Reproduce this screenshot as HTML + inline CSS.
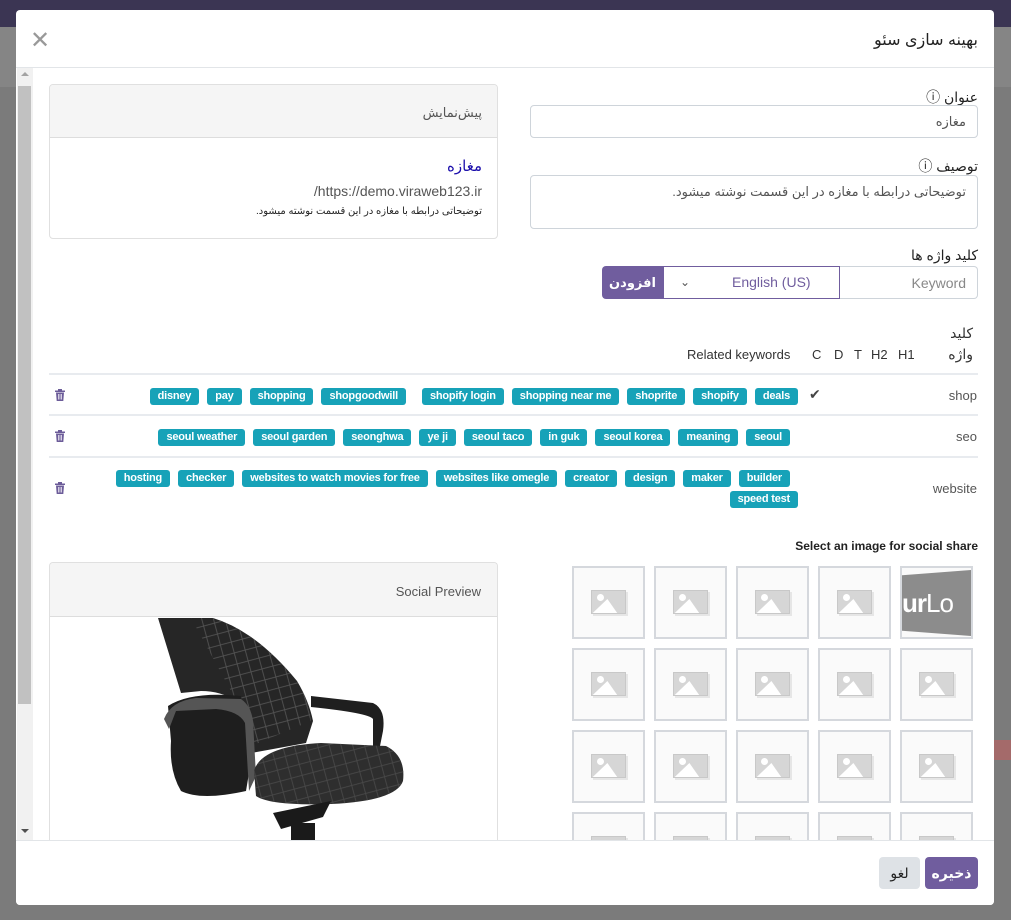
<!DOCTYPE html>
<html><head><meta charset="utf-8">
<style>
*{box-sizing:border-box;margin:0;padding:0}
body{width:1011px;height:920px;overflow:hidden;background:#7b7b7b;font-family:"Liberation Sans","DejaVu Sans",sans-serif;position:relative;color:#444}
.a{position:absolute}
.fa{font-family:"Liberation Sans","Noto Sans CJK SC","DejaVu Sans",sans-serif}
.tagrow{position:absolute;display:flex;justify-content:flex-end;gap:8px}
.tag{background:#17a2b8;color:#fff;font-size:11px;font-weight:bold;height:17px;line-height:17px;padding:0 8px;border-radius:3px;white-space:nowrap;letter-spacing:-0.2px}
.tile{position:absolute;width:73px;height:73px;border:2px solid #d5d8dd;background:#fafafa}
.tile .ph{position:absolute;left:17px;top:22px;width:35px;height:24px;background:#d6d6d6;border:1px solid #c8c8c8;box-shadow:2px 2px 0 #e6e6e6;overflow:hidden}
.trash{position:absolute;left:55px;width:10px;height:12px}
.hr{position:absolute;left:49px;width:929px;height:2px;background:#e8ebef}
.ph::after{content:"";position:absolute;left:0;top:8px;width:0;height:0;border-left:14px solid transparent;border-right:14px solid transparent;border-bottom:16px solid #fff;transform:skewX(-10deg)}
.ph::before{content:"";position:absolute;left:5px;top:3px;width:7px;height:7px;border-radius:50%;background:#fff}
</style></head><body>
<div class="a" style="left:0;top:0;width:1011px;height:27px;background:#3b3553"></div>
<div class="a" style="left:0;top:27px;width:1011px;height:60px;background:#858585"></div>
<div class="a" style="left:994px;top:740px;width:17px;height:20px;background:#a46a6a"></div>

<!-- social preview card (under modal footer) -->
<div class="a" style="left:16px;top:10px;width:978px;height:895px;background:#fff;border-radius:4px"></div>

<div class="a" style="left:49px;top:562px;width:449px;height:278px;border:1px solid #e0e0e0;border-bottom:none;border-radius:4px 4px 0 0;overflow:hidden;background:#fff">
  <div class="a" style="left:0;top:0;width:449px;height:54px;background:#f5f5f5;border-bottom:1px solid #ddd"></div>
  <div class="a" style="right:16px;top:21px;font-size:13px;color:#555">Social Preview</div>
  <svg class="a" style="left:0;top:54px" width="449" height="230" viewBox="49 616 449 230">
    <defs><pattern id="dm" width="16" height="16" patternUnits="userSpaceOnUse" patternTransform="rotate(30)"><path d="M0 0L16 16M16 0L0 16" stroke="#555" stroke-width="0.8"/></pattern></defs>
    <path d="M157 617 L212 617 Q255 630 296 680 Q308 700 312 720 L305 742 L250 752 L235 700 Q220 690 200 690 L180 692 Z" fill="#262626"/>
    <path d="M190 617 L212 617 Q255 630 296 680 Q308 700 310 720 L250 745 L230 690 Z" fill="url(#dm)"/>
    <path d="M167 705 Q190 690 240 695 L250 760 L245 790 Q200 800 180 790 Q168 770 170 740 Z" fill="#1e1e1e"/>
    <path d="M163 718 Q170 700 195 697 L240 698 Q250 705 252 720 L255 775 L248 790 L244 722 Q238 710 215 708 L175 710 L168 728 Z" fill="#555"/>
    <path d="M310 695 L372 702 Q385 708 382 730 L378 750 L372 748 L372 718 Q368 712 310 706 Z" fill="#1f1f1f"/>
    <path d="M253 770 Q260 745 320 742 L385 745 Q405 755 402 780 Q395 800 330 803 Q270 805 255 795 Z" fill="#2e2e2e"/>
    <path d="M253 770 Q260 745 320 742 L385 745 Q405 755 402 780 Q395 800 330 803 Q270 805 255 795 Z" fill="url(#dm)" opacity="0.7"/>
    <path d="M272 812 L330 800 L322 816 L280 828 Z M290 822 h24 v24 h-24z" fill="#1a1a1a"/>
  </svg>
</div>

<div class="a" style="left:16px;top:10px;width:978px;height:895px;border-radius:4px;pointer-events:none">
  <div class="a" style="left:14px;top:18px;font-size:24px;color:#999;line-height:26px">✕</div>
  <div class="a fa" style="right:16px;top:20px;font-size:16px;color:#222;direction:rtl">بهینه سازی سئو</div>
  <div class="a" style="left:0;top:57px;width:978px;height:1px;background:#e2e5e8"></div>
  <div class="a" style="left:1px;top:58px;width:16px;height:772px;background:#f1f1f1"></div>
  <div class="a" style="left:2px;top:76px;width:13px;height:618px;background:#c1c1c1"></div>
  <div class="a" style="left:5px;top:62px;width:0;height:0;border-left:4px solid transparent;border-right:4px solid transparent;border-bottom:4px solid #a3a3a3"></div>
  <div class="a" style="left:5px;top:819px;width:0;height:0;border-left:4px solid transparent;border-right:4px solid transparent;border-top:4px solid #505050"></div>
  <div class="a" style="left:0;top:830px;width:978px;height:65px;background:#fff;border-top:1px solid #e2e5e8;border-radius:0 0 4px 4px"></div>
  <div class="a fa" style="left:863px;top:847px;width:41px;height:32px;background:#dee2e6;border-radius:4px;font-size:14px;text-align:center;line-height:32px;color:#222">لغو</div>
  <div class="a fa" style="left:909px;top:847px;width:53px;height:32px;background:#705d9e;border-radius:4px;font-size:14px;font-weight:bold;text-align:center;line-height:32px;color:#fff">ذخیره</div>
</div>

<!-- preview card -->
<div class="a" style="left:49px;top:84px;width:449px;height:155px;border:1px solid #e0e0e0;border-radius:4px;overflow:hidden">
  <div class="a" style="left:0;top:0;width:449px;height:53px;background:#f5f5f5;border-bottom:1px solid #ddd"></div>
  <div class="a fa" style="right:15px;top:20px;font-size:13px;color:#555;direction:rtl">پیش‌نمایش</div>
  <div class="a fa" style="right:15px;top:72px;font-size:15px;color:#1a0dab;direction:rtl">مغازه</div>
  <div class="a" style="right:15px;top:98px;font-size:14px;color:#555">/https://demo.viraweb123.ir</div>
  <div class="a fa" style="right:15px;top:121px;font-size:10px;color:#222;direction:rtl">توضیحاتی درابطه با مغازه در این قسمت نوشته میشود.</div>
</div>

<!-- right form -->
<div class="a fa" style="right:33px;top:87px;font-size:14px;color:#222;direction:rtl">عنوان ⓘ</div>
<div class="a" style="left:530px;top:105px;width:448px;height:33px;border:1px solid #ced4da;border-radius:4px"></div>
<div class="a fa" style="right:45px;top:114px;font-size:13px;color:#555;direction:rtl">مغازه</div>
<div class="a fa" style="right:33px;top:156px;font-size:14px;color:#222;direction:rtl">توصیف ⓘ</div>
<div class="a" style="left:530px;top:175px;width:448px;height:54px;border:1px solid #ced4da;border-radius:4px"></div>
<div class="a fa" style="right:45px;top:184px;font-size:13px;color:#555;direction:rtl">توضیحاتی درابطه با مغازه در این قسمت نوشته میشود.</div>
<div class="a fa" style="right:33px;top:247px;font-size:14px;color:#222;direction:rtl">کلید واژه ها</div>
<div class="a fa" style="left:602px;top:266px;width:61px;height:33px;background:#705d9e;border-radius:4px 0 0 4px;color:#fff;font-size:13px;font-weight:bold;text-align:center;line-height:33px">افزودن</div>
<div class="a" style="left:663px;top:266px;width:177px;height:33px;border:1px solid #705d9e"></div>
<div class="a" style="left:680px;top:275px;font-size:12px;color:#555">&#8964;</div>
<div class="a" style="left:732px;top:274px;font-size:14px;color:#705d9e">English (US)</div>
<div class="a" style="left:840px;top:266px;width:138px;height:33px;border:1px solid #ced4da;border-left:none;border-radius:0 4px 4px 0"></div>
<div class="a" style="right:45px;top:275px;font-size:14px;color:#888">Keyword</div>

<!-- table head -->
<div class="a fa" style="right:38px;top:325px;font-size:14px;color:#333;direction:rtl">کلید</div>
<div class="a fa" style="right:38px;top:346px;font-size:14px;color:#333;direction:rtl">واژه</div>
<div class="a" style="left:687px;top:347px;font-size:13px;color:#333">Related keywords</div>
<div class="a" style="left:812px;top:347px;font-size:13px;color:#333">C</div>
<div class="a" style="left:834px;top:347px;font-size:13px;color:#333">D</div>
<div class="a" style="left:854px;top:347px;font-size:13px;color:#333">T</div>
<div class="a" style="left:871px;top:347px;font-size:13px;color:#333">H2</div>
<div class="a" style="left:898px;top:347px;font-size:13px;color:#333">H1</div>
<div class="hr" style="top:373px"></div>
<div class="hr" style="top:414px"></div>
<div class="hr" style="top:456px"></div>

<div class="a" style="right:34px;top:388px;font-size:13px;color:#555">shop</div>
<div class="a" style="right:34px;top:429px;font-size:13px;color:#555">seo</div>
<div class="a" style="right:34px;top:481px;font-size:13px;color:#555">website</div>
<div class="a" style="left:809px;top:386px;font-size:14px;color:#444">✔</div>

<svg class="trash" style="top:389px" viewBox="0 0 10 12"><rect x="0" y="1.5" width="10" height="1.5" fill="#6c5c99"/><rect x="3" y="0" width="4" height="2" fill="#6c5c99"/><path d="M1 3.5h8l-0.7 8.5h-6.6z" fill="#6c5c99"/><path d="M3.5 5v5.5M5 5v5.5M6.5 5v5.5" stroke="#fff" stroke-width="0.7"/></svg>
<svg class="trash" style="top:430px" viewBox="0 0 10 12"><rect x="0" y="1.5" width="10" height="1.5" fill="#6c5c99"/><rect x="3" y="0" width="4" height="2" fill="#6c5c99"/><path d="M1 3.5h8l-0.7 8.5h-6.6z" fill="#6c5c99"/><path d="M3.5 5v5.5M5 5v5.5M6.5 5v5.5" stroke="#fff" stroke-width="0.7"/></svg>
<svg class="trash" style="top:482px" viewBox="0 0 10 12"><rect x="0" y="1.5" width="10" height="1.5" fill="#6c5c99"/><rect x="3" y="0" width="4" height="2" fill="#6c5c99"/><path d="M1 3.5h8l-0.7 8.5h-6.6z" fill="#6c5c99"/><path d="M3.5 5v5.5M5 5v5.5M6.5 5v5.5" stroke="#fff" stroke-width="0.7"/></svg>

<div class="tagrow" style="right:213px;top:388px;width:700px">
<span class="tag">disney</span><span class="tag">pay</span><span class="tag">shopping</span><span class="tag" style="margin-right:8px">shopgoodwill</span><span class="tag">shopify login</span><span class="tag">shopping near me</span><span class="tag">shoprite</span><span class="tag">shopify</span><span class="tag">deals</span>
</div>
<div class="tagrow" style="right:221px;top:429px;width:700px">
<span class="tag">seoul weather</span><span class="tag">seoul garden</span><span class="tag">seonghwa</span><span class="tag">ye ji</span><span class="tag">seoul taco</span><span class="tag">in guk</span><span class="tag">seoul korea</span><span class="tag">meaning</span><span class="tag">seoul</span>
</div>
<div class="tagrow" style="right:221px;top:470px;width:700px">
<span class="tag">hosting</span><span class="tag">checker</span><span class="tag">websites to watch movies for free</span><span class="tag">websites like omegle</span><span class="tag">creator</span><span class="tag">design</span><span class="tag">maker</span><span class="tag">builder</span>
</div>
<div class="tagrow" style="right:213px;top:491px;width:200px"><span class="tag">speed test</span></div>

<div class="a" style="right:33px;top:539px;font-size:12px;font-weight:bold;color:#222">Select an image for social share</div>

<!-- tiles -->
<div class="tile" style="left:572px;top:566px"><div class="ph"></div></div>
<div class="tile" style="left:654px;top:566px"><div class="ph"></div></div>
<div class="tile" style="left:736px;top:566px"><div class="ph"></div></div>
<div class="tile" style="left:818px;top:566px"><div class="ph"></div></div>
<div class="tile" style="left:900px;top:566px;overflow:hidden"><div class="a" style="left:0;top:2px;width:69px;height:66px;background:#8c8c8c;clip-path:polygon(0 8%,100% 0,100% 100%,0 92%)"></div><div class="a" style="left:0;top:20px;font-size:26px;color:#fff;letter-spacing:-1px;line-height:30px;white-space:nowrap"><b>ur</b>Lo</div></div>
<div class="tile" style="left:572px;top:648px"><div class="ph"></div></div>
<div class="tile" style="left:654px;top:648px"><div class="ph"></div></div>
<div class="tile" style="left:736px;top:648px"><div class="ph"></div></div>
<div class="tile" style="left:818px;top:648px"><div class="ph"></div></div>
<div class="tile" style="left:900px;top:648px"><div class="ph"></div></div>
<div class="tile" style="left:572px;top:730px"><div class="ph"></div></div>
<div class="tile" style="left:654px;top:730px"><div class="ph"></div></div>
<div class="tile" style="left:736px;top:730px"><div class="ph"></div></div>
<div class="tile" style="left:818px;top:730px"><div class="ph"></div></div>
<div class="tile" style="left:900px;top:730px"><div class="ph"></div></div>
<div class="a" style="left:560px;top:812px;width:420px;height:28px;overflow:hidden">
<div class="tile" style="left:12px;top:0"><div class="ph"></div></div>
<div class="tile" style="left:94px;top:0"><div class="ph"></div></div>
<div class="tile" style="left:176px;top:0"><div class="ph"></div></div>
<div class="tile" style="left:258px;top:0"><div class="ph"></div></div>
<div class="tile" style="left:340px;top:0"><div class="ph"></div></div>
</div>
</body></html>
